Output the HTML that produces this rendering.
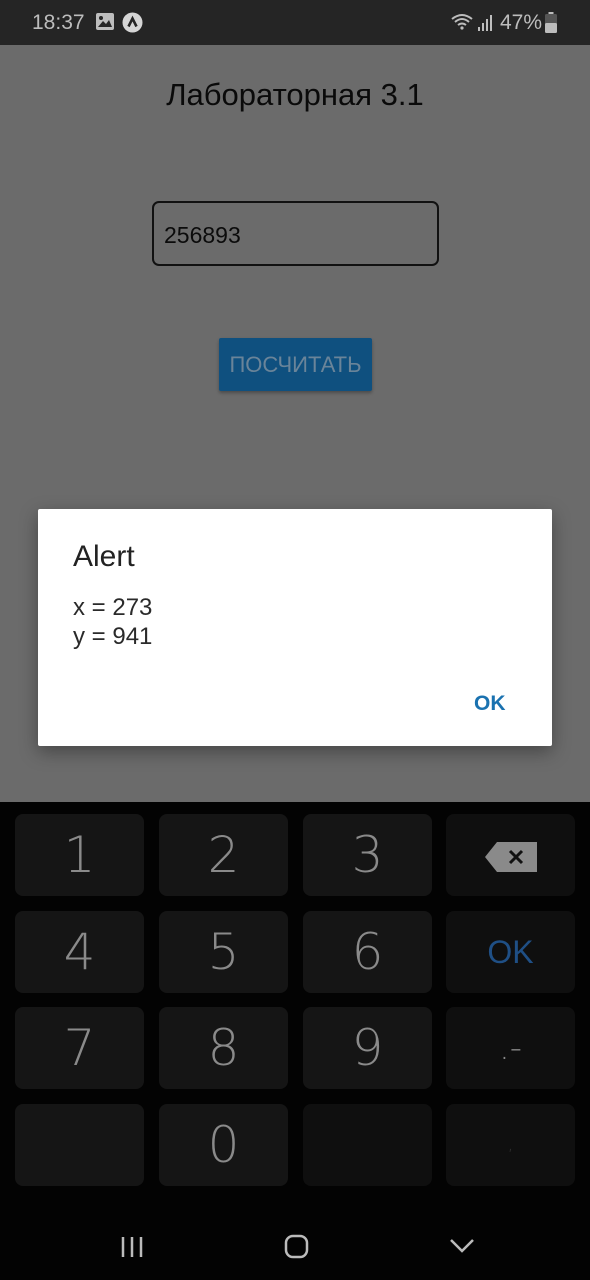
<!DOCTYPE html>
<html><head><meta charset="utf-8"><style>
*{margin:0;padding:0;box-sizing:border-box}
body{width:590px;height:1280px;position:relative;background:#6b6b6b;font-family:"Liberation Sans",Roboto,sans-serif;overflow:hidden}
.sb{position:absolute;left:0;top:0;width:590px;height:45px;background:#252525;color:#bdbdbd;font-size:21px}
.abs{position:absolute}
.kb{position:absolute;left:0;top:802px;width:590px;height:478px;background:#030303}
.k{position:absolute;width:129px;height:82px;border-radius:8px;background:#151515;color:#8a8a8a;font-size:50px;font-weight:200;text-align:center;line-height:82px;font-family:"DejaVu Sans",sans-serif}
.k.s{background:#0f0f0f}
</style></head><body>
<div class="sb">
 <div class="abs" style="left:32px;top:11px">18:37</div>
 <svg class="abs" style="left:96px;top:13px" width="18" height="17"><rect x="0" y="0" width="18" height="17" rx="2" fill="#bdbdbd"/><path d="M2 14 L7 8 L10 11 L13 7 L16 14Z" fill="#252525"/><circle cx="5" cy="5" r="2" fill="#252525"/></svg>
 <svg class="abs" style="left:122px;top:12px" width="21" height="21"><circle cx="10.5" cy="10.5" r="10" fill="#d6d6d6"/><path d="M6.5 14.5 L10.5 6.5 L14.5 14.5" stroke="#252525" stroke-width="2.6" fill="none"/></svg>
 <svg class="abs" style="left:451px;top:13px" width="44" height="20"><path d="M1 6 Q11 -2 21 6 M4 9 Q11 3 18 9 M7 12 Q11 9 15 12" stroke="#bdbdbd" stroke-width="2" fill="none"/><circle cx="11" cy="15" r="1.6" fill="#bdbdbd"/><rect x="27" y="14" width="2" height="4" fill="#bdbdbd"/><rect x="31" y="10" width="2" height="8" fill="#bdbdbd"/><rect x="35" y="6" width="2" height="12" fill="#bdbdbd"/><rect x="39" y="2" width="2" height="16" fill="#bdbdbd"/></svg>
 <div class="abs" style="left:500px;top:11px">47%</div>
 <svg class="abs" style="left:545px;top:12px" width="12" height="21"><rect x="3.5" y="0" width="5" height="3" fill="#bdbdbd"/><rect x="0" y="2" width="12" height="19" rx="1.5" fill="#555"/><rect x="0" y="11" width="12" height="10" rx="1.5" fill="#bdbdbd"/></svg>
</div>
<div class="abs" style="left:0;top:77px;width:590px;text-align:center;font-size:31px;color:#0a0a0a">Лабораторная 3.1</div>
<div class="abs" style="left:152px;top:201px;width:287px;height:65px;border:2px solid #111;border-radius:7px;font-size:23px;color:#0b0b0b;padding:19px 0 0 10px">256893</div>
<div class="abs" style="left:219px;top:338px;width:153px;height:53px;background:#0f507f;border-radius:2px;color:#6a8499;font-size:22px;text-align:center;line-height:53px;box-shadow:0 2px 3px rgba(0,0,0,.3)">ПОСЧИТАТЬ</div>
<div class="abs" style="left:38px;top:509px;width:514px;height:237px;background:#fff;border-radius:2px;box-shadow:0 6px 18px rgba(0,0,0,.35)">
 <div class="abs" style="left:35px;top:31px;font-size:30px;color:#222">Alert</div>
 <div class="abs" style="left:35px;top:84px;font-size:24px;line-height:29px;color:#2a2a2a">x = 273<br>y = 941</div>
 <div class="abs" style="left:436px;top:183px;font-size:21px;font-weight:bold;color:#1a72b0">OK</div>
</div>
<div class="kb">
 <div class="k" style="left:15px;top:12px">1</div>
 <div class="k" style="left:159px;top:12px">2</div>
 <div class="k" style="left:303px;top:12px">3</div>
 <div class="k s" style="left:446px;top:12px"><svg width="52" height="30" style="margin-top:26px"><path d="M12 0 H52 V30 H12 L0 15Z" fill="#8a8a8a"/><path d="M25 9 L37 21 M37 9 L25 21" stroke="#111" stroke-width="3"/></svg></div>
 <div class="k" style="left:15px;top:109px">4</div>
 <div class="k" style="left:159px;top:109px">5</div>
 <div class="k" style="left:303px;top:109px">6</div>
 <div class="k s" style="left:446px;top:109px;color:#1f4f85;font-size:32px;font-weight:400;font-family:'Liberation Sans',sans-serif">OK</div>
 <div class="k" style="left:15px;top:205px">7</div>
 <div class="k" style="left:159px;top:205px">8</div>
 <div class="k" style="left:303px;top:205px">9</div>
 <div class="k s" style="left:446px;top:205px;font-size:34px">.-</div>
 <div class="k" style="left:15px;top:302px"></div>
 <div class="k" style="left:159px;top:302px">0</div>
 <div class="k s" style="left:303px;top:302px"></div>
 <div class="k s" style="left:446px;top:302px;font-size:18px;color:#333">,</div>
 <svg class="abs" style="left:120px;top:433px" width="24" height="24"><path d="M3 2V22 M12 2V22 M21 2V22" stroke="#bbb" stroke-width="2.5"/></svg>
 <svg class="abs" style="left:284px;top:432px" width="26" height="26"><rect x="2" y="2" width="21" height="21" rx="7" stroke="#bbb" stroke-width="2.5" fill="none"/></svg>
 <svg class="abs" style="left:449px;top:436px" width="26" height="16"><path d="M2 2 L13 13 L24 2" stroke="#bbb" stroke-width="2.5" fill="none"/></svg>
</div>
</body></html>
